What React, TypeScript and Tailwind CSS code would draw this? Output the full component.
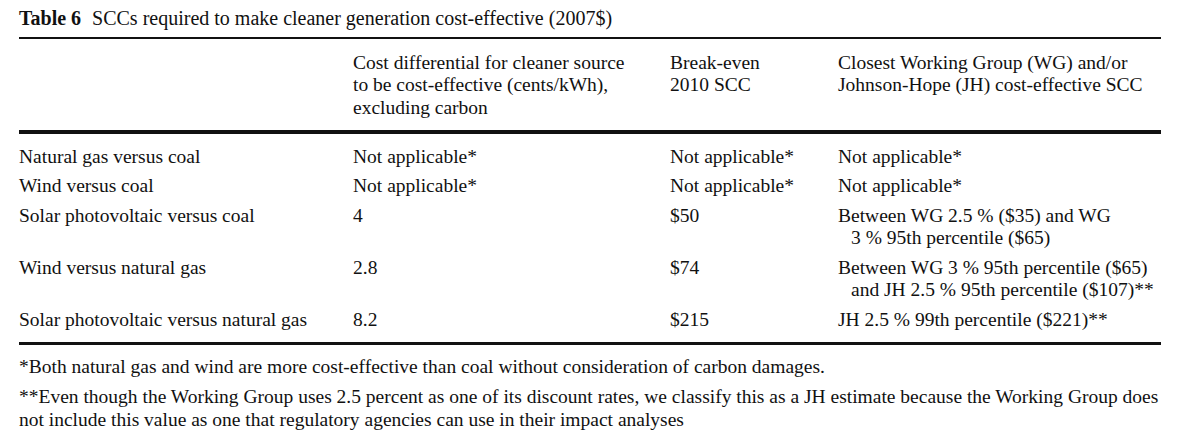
const rows = [
  {
    pair: "Natural gas versus coal",
    diff: "Not applicable*",
    scc: "Not applicable*",
    wg: ["Not applicable*"],
  },
  {
    pair: "Wind versus coal",
    diff: "Not applicable*",
    scc: "Not applicable*",
    wg: ["Not applicable*"],
  },
  {
    pair: "Solar photovoltaic versus coal",
    diff: "4",
    scc: "$50",
    wg: ["Between WG 2.5 % ($35) and WG", "3 % 95th percentile ($65)"],
  },
  {
    pair: "Wind versus natural gas",
    diff: "2.8",
    scc: "$74",
    wg: ["Between WG 3 % 95th percentile ($65)", "and JH 2.5 % 95th percentile ($107)**"],
  },
  {
    pair: "Solar photovoltaic versus natural gas",
    diff: "8.2",
    scc: "$215",
    wg: ["JH 2.5 % 99th percentile ($221)**"],
  },
];

const cols = "grid grid-cols-[334px_317px_168px_1fr]";

export default function App() {
  return (
    <div className="w-[1177px] h-[435px] bg-white text-[#111] font-['Liberation_Serif',serif] text-[19.5px] leading-[22.5px] overflow-hidden">
      <div className="ml-[19px] w-[1142px] pt-[7px]">
        {/* Caption */}
        <p className="whitespace-nowrap text-[20px]">
          <span className="font-bold mr-[6px]">Table 6</span> SCCs required to make cleaner generation cost-effective (2007$)
        </p>

        {/* Header */}
        <div className={`${cols} mt-[7.5px] border-t-2 border-b-4 border-[#111] pt-[12.5px] pb-[11px]`}>
          <div />
          <div>
            Cost differential for cleaner source
            <br />
            to be cost-effective (cents/kWh),
            <br />
            excluding carbon
          </div>
          <div>
            Break-even
            <br />
            2010 SCC
          </div>
          <div>
            Closest Working Group (WG) and/or
            <br />
            Johnson-Hope (JH) cost-effective SCC
          </div>
        </div>

        {/* Body */}
        <div className="border-b-[3px] border-[#111] pt-[8px] pb-[7.5px]">
          {rows.map((r) => (
            <div key={r.pair} className={`${cols} py-[3.5px]`}>
              <div>{r.pair}</div>
              <div>{r.diff}</div>
              <div>{r.scc}</div>
              <div>
                {r.wg.map((line, i) => (
                  <div key={i} className={i > 0 ? "pl-[13px]" : ""}>
                    {line}
                  </div>
                ))}
              </div>
            </div>
          ))}
        </div>

        {/* Footnotes */}
        <div className="pt-[11px] whitespace-nowrap">
          <p>*Both natural gas and wind are more cost-effective than coal without consideration of carbon damages.</p>
          <p className="mt-[7.5px]">
            **Even though the Working Group uses 2.5 percent as one of its discount rates, we classify this as a JH estimate because the Working Group does
            <br />
            not include this value as one that regulatory agencies can use in their impact analyses
          </p>
        </div>
      </div>
    </div>
  );
}
